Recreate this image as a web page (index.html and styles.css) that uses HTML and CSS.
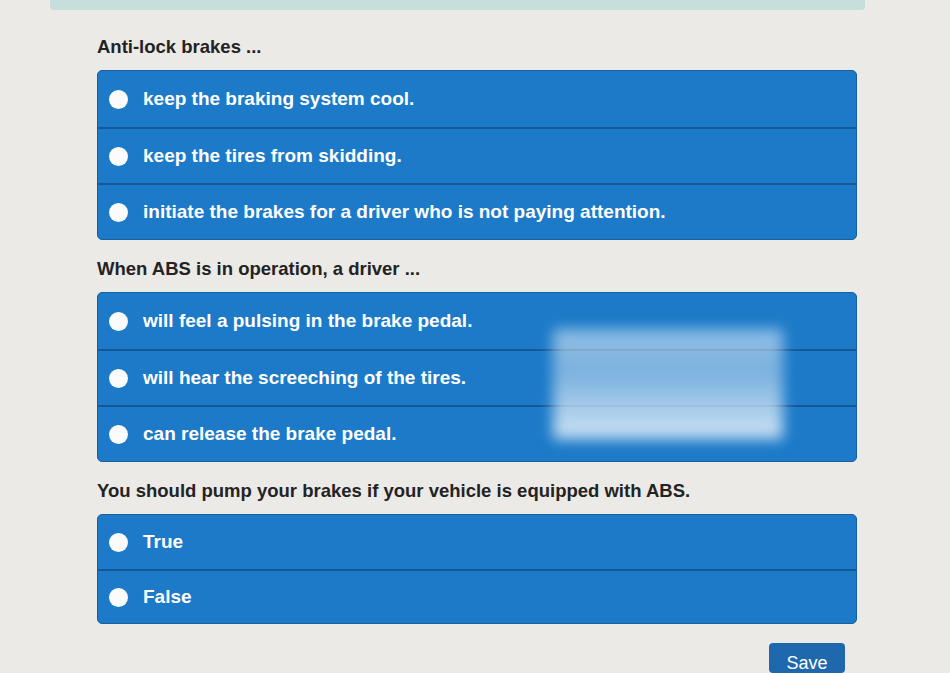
FILE: index.html
```html
<!DOCTYPE html>
<html>
<head>
<meta charset="utf-8">
<link rel="stylesheet" href="styles.css">
</head>
<body>
<div class="topbar"></div>
<main class="quiz">
  <section class="q">
    <h2 class="q-title">Anti-lock brakes ...</h2>
    <div class="opts">
      <label class="opt"><span class="radio"></span><span>keep the braking system cool.</span></label>
      <label class="opt"><span class="radio"></span><span>keep the tires from skidding.</span></label>
      <label class="opt"><span class="radio"></span><span>initiate the brakes for a driver who is not paying attention.</span></label>
    </div>
  </section>
  <section class="q">
    <h2 class="q-title">When ABS is in operation, a driver ...</h2>
    <div class="opts">
      <label class="opt"><span class="radio"></span><span>will feel a pulsing in the brake pedal.</span></label>
      <label class="opt"><span class="radio"></span><span>will hear the screeching of the tires.</span></label>
      <label class="opt"><span class="radio"></span><span>can release the brake pedal.</span></label>
      <div class="glare"></div>
    </div>
  </section>
  <section class="q">
    <h2 class="q-title">You should pump your brakes if your vehicle is equipped with ABS.</h2>
    <div class="opts opts-short">
      <label class="opt"><span class="radio"></span><span>True</span></label>
      <label class="opt"><span class="radio"></span><span>False</span></label>
    </div>
  </section>
  <div class="actions"><button class="save">Save</button></div>
</main>
</body>
</html>
```

FILE: styles.css
```css
html, body {
  margin: 0;
  padding: 0;
  background: #ebeae6;
  height: 673px;
  overflow: hidden;
}
body {
  font-family: "Liberation Sans", Arial, sans-serif;
  color: #222;
}
.topbar {
  margin-left: 50px;
  width: 815px;
  height: 10px;
  background: #c6dfdc;
  border-radius: 0 0 4px 4px;
}
.quiz {
  padding-left: 97px;
  width: 760px;
}
.q-title {
  margin: 0;
  font-size: 18.5px;
  line-height: 20px;
  font-weight: bold;
  color: #232323;
}
.q:first-child .q-title { margin-top: 27px; }
.q + .q .q-title { margin-top: 19px; }
.opts {
  margin-top: 13px;
  background: #1c7ac8;
  border-radius: 5px;
  border: 1px solid #16609f;
  overflow: hidden;
  position: relative;
}
.opt {
  display: flex;
  align-items: center;
  gap: 15px;
  height: 56px;
  padding-left: 11px;
  color: #fff;
  font-size: 19px;
  font-weight: bold;
  box-sizing: border-box;
}
.opts-short .opt { height: 54px; }
.opt + .opt { border-top: 2px solid #15589a; }
.radio {
  width: 19px;
  height: 19px;
  border-radius: 50%;
  background: #fbfbfb;
  flex: none;
}
.glare {
  position: absolute;
  left: 455px;
  top: 36px;
  width: 230px;
  height: 110px;
  background: linear-gradient(180deg, rgba(240,246,252,0.55) 0%, rgba(240,246,252,0.45) 40%, rgba(250,252,255,0.8) 100%);
  filter: blur(7px);
  pointer-events: none;
}
.actions {
  display: flex;
  justify-content: flex-end;
  margin-top: 19px;
  padding-right: 12px;
}
.save {
  width: 76px;
  height: 30px;
  border: none;
  border-radius: 4px;
  background: #1f68ad;
  color: #fff;
  font-family: "Liberation Sans", Arial, sans-serif;
  font-size: 18px;
  line-height: 20px;
  padding: 9px 0 0;
}
```
